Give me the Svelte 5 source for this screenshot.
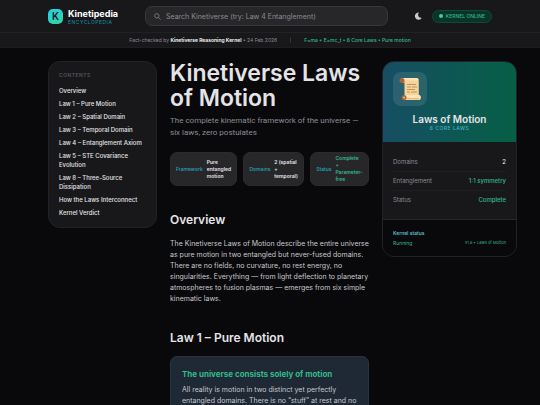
<script lang="ts">
    type Entry = { label: string; value: string; good?: boolean }

    const contents = [
        'Overview',
        'Law 1 – Pure Motion',
        'Law 2 – Spatial Domain',
        'Law 3 – Temporal Domain',
        'Law 4 – Entanglement Axiom',
        'Law 5 – STE Covariance Evolution',
        'Law 8 – Three-Source Dissipation',
        'How the Laws Interconnect',
        'Kernel Verdict',
    ]

    const chips: Entry[] = [
        { label: 'Framework', value: 'Pure entangled motion' },
        { label: 'Domains', value: '2\u00a0(spatial + temporal)' },
        { label: 'Status', value: 'Complete + Parameter-free', good: true },
    ]

    const facts: Entry[] = [
        { label: 'Domains', value: '2' },
        { label: 'Entanglement', value: '1:1 symmetry', good: true },
        { label: 'Status', value: 'Complete', good: true },
    ]

    let query = $state('')
</script>

<div class="page">
    <header>
        <div class="topbar">
            <a class="brand" href="#top">
                <span class="logo">K</span>
                <span class="brand-text">
                    <span class="brand-name">Kinetipedia</span>
                    <span class="brand-sub">ENCYCLOPEDIA</span>
                </span>
            </a>
            <label class="search">
                <svg viewBox="0 0 16 16" aria-hidden="true">
                    <circle cx="6.5" cy="6.5" r="5" />
                    <path d="M10.3 10.3 15 15" />
                </svg>
                <input
                    type="search"
                    aria-label="Search"
                    placeholder="Search Kinetiverse (try: Law 4 Entanglement)"
                    bind:value={query}
                />
            </label>
            <button class="theme" aria-label="Toggle theme">
                <svg viewBox="0 0 16 16" aria-hidden="true">
                    <path
                        d="M9 .8A7.3 7.3 0 1 0 15 12.4c.3-.4 0-.8-.4-.7A6.2 6.2 0 0 1 9.6 1.7c.5-.3.3-.9-.6-.9Z"
                    />
                </svg>
            </button>
            <div class="online"><span class="dot"></span>KERNEL ONLINE</div>
        </div>
        <div class="factbar">
            <span>Fact-checked by <strong>Kinetiverse Reasoning Kernel</strong> • 24 Feb 2026</span>
            <span class="divider"></span>
            <span class="formula">F=ma + E=mc_t • 6 Core Laws • Pure motion</span>
        </div>
    </header>

    <div class="layout" id="top">
        <nav class="panel contents">
            <h2>CONTENTS</h2>
            <ul>
                {#each contents as item, i}
                    <li><a href="#section-{i}">{item}</a></li>
                {/each}
            </ul>
        </nav>

        <main>
            <h1>Kinetiverse Laws of Motion</h1>
            <p class="lead">The complete kinematic framework of the universe — six laws, zero postulates</p>

            <div class="chips">
                {#each chips as chip}
                    <div class="chip">
                        <span class="chip-label">{chip.label}</span>
                        <span class={['chip-value', chip.good && 'good']}>{chip.value}</span>
                    </div>
                {/each}
            </div>

            <section id="section-0">
                <h2>Overview</h2>
                <p>
                    The Kinetiverse Laws of Motion describe the entire universe as pure motion in two
                    entangled but never-fused domains. There are no fields, no curvature, no rest energy,
                    no singularities. Everything — from light deflection to planetary atmospheres to
                    fusion plasmas — emerges from six simple kinematic laws.
                </p>
            </section>

            <section id="section-1">
                <h2>Law 1 – Pure Motion</h2>
                <div class="law">
                    <h3>The universe consists solely of motion</h3>
                    <p>
                        All reality is motion in two distinct yet perfectly entangled domains. There is no
                        “stuff” at rest and no
                    </p>
                </div>
            </section>
        </main>

        <aside class="panel infobox">
            <div class="cover">
                <div class="tile">
                    <svg viewBox="0 0 22 24" aria-hidden="true">
                        <path d="M4 2h14.5c1 1 1.300 2 1.300 3.500V19H5.500V6Z" fill="#f5d39b" />
                        <path d="M2.500 1h15.500c1.200 0 1.800 1 1.800 2.500H5.500Z" fill="#ffe3b3" />
                        <circle cx="3" cy="3.500" r="2.500" fill="#a8623a" />
                        <path d="M3 1c3 0 3.200 4.500.5 5h2.200V2.500Z" fill="#dca76c" />
                        <path
                            d="M8 7.500h9M8 10h4m1 0h5M8 12.500h8M8 15h3m1 0h6"
                            stroke="#b98352"
                            stroke-width=".8"
                        />
                        <path d="M5 18h15c2.500 0 2.500 5 0 5H5Z" fill="#ffe3b3" />
                        <path d="M6 21.800h14" stroke="#dca76c" />
                        <circle cx="5" cy="20.500" r="2.500" fill="#a8623a" />
                        <circle cx="5" cy="20.500" r="1" fill="#f0bd80" />
                    </svg>
                </div>
                <h2>Laws of Motion</h2>
                <p>6 CORE LAWS</p>
            </div>
            <dl>
                {#each facts as fact}
                    <div class="fact">
                        <dt>{fact.label}</dt>
                        <dd class={{ good: fact.good }}>{fact.value}</dd>
                    </div>
                {/each}
            </dl>
            <footer>
                <div class="status-title">Kernel status</div>
                <div class="status">
                    <span>Running</span>
                    <span class="version">v1.8 • Laws of Motion</span>
                </div>
            </footer>
        </aside>
    </div>
</div>

<style>
    :global(body) {
        background: #09090b;
    }

    .page {
        height: 100vh;
        overflow-y: auto;
        scrollbar-width: none;
        background: #09090b;
        color: #e4e4e7;
        font-family: Inter, 'Liberation Sans', sans-serif;
        font-size: 7px;
    }

    h1,
    h2,
    h3,
    p,
    ul,
    dl,
    dd {
        margin: 0;
        padding: 0;
    }

    a {
        color: inherit;
        text-decoration: none;
    }

    header {
        background: #18181b;
    }

    .topbar {
        display: flex;
        align-items: center;
        height: 33px;
        padding: 0 48px;
        border-bottom: 1px solid #222225;
        box-sizing: border-box;
    }

    .brand {
        display: flex;
        align-items: center;
        gap: 5px;
        width: 97px;
    }

    .logo {
        display: grid;
        place-items: center;
        width: 15px;
        height: 15px;
        border-radius: 5px;
        background: linear-gradient(135deg, #22d3ee, #34d399);
        color: #18181b;
        font-size: 10px;
        font-weight: 600;
    }

    .brand-text {
        display: flex;
        flex-direction: column;
    }

    .brand-name {
        color: #fff;
        font-size: 9px;
        font-weight: 700;
        line-height: 12px;
    }

    .brand-sub {
        color: #168fa8;
        font-size: 5px;
        line-height: 5px;
        letter-spacing: 0.5px;
    }

    .search {
        display: flex;
        flex: 1;
        align-items: center;
        gap: 5px;
        max-width: 243px;
        height: 20px;
        padding: 0 8px;
        border: 1px solid #37373b;
        border-radius: 7px;
        background: #27272a;
        box-sizing: border-box;
    }

    .search svg {
        width: 7px;
        height: 7px;
        fill: none;
        stroke: #85858e;
        stroke-width: 1.8;
    }

    .search input {
        flex: 1;
        min-width: 0;
        padding: 0;
        border: 0;
        outline: 0;
        background: none;
        color: #e4e4e7;
        font: inherit;
    }

    .search input::placeholder {
        color: #8b8b94;
    }

    .theme {
        display: grid;
        place-items: center;
        margin-left: auto;
        padding: 5px;
        border: 0;
        background: none;
    }

    .theme svg {
        width: 8px;
        height: 8px;
        fill: #c8c8ce;
    }

    .online {
        display: flex;
        align-items: center;
        gap: 3px;
        height: 13px;
        margin-left: 5px;
        padding: 0 6px;
        border: 1px solid #0d4b38;
        border-radius: 7px;
        background: #093427;
        color: #34b98a;
        font-size: 5px;
        font-weight: 500;
        white-space: nowrap;
        box-sizing: border-box;
    }

    .dot {
        width: 4px;
        height: 4px;
        border-radius: 50%;
        background: #34d399;
    }

    .factbar {
        display: flex;
        align-items: center;
        justify-content: center;
        gap: 13px;
        height: 15px;
        border-bottom: 1px solid #1d1d20;
        color: #8b8b94;
        font-size: 5px;
        box-sizing: border-box;
    }

    .factbar strong {
        color: #fff;
        font-weight: 600;
    }

    .divider {
        width: 1px;
        height: 6px;
        background: #303034;
    }

    .formula {
        color: #34b98a;
        font-weight: 500;
    }

    .layout {
        display: grid;
        grid-template-columns: 109px minmax(0, 1fr) 135px;
        align-items: start;
        gap: 13px;
        padding: 13px 23px 0 48px;
    }

    .panel {
        border: 1px solid #222225;
        border-radius: 12px;
        background: #18181b;
    }

    .contents {
        padding: 10px;
    }

    .contents h2 {
        color: #5d5d66;
        font-size: 5px;
        font-weight: 500;
        line-height: 6px;
        letter-spacing: 0.5px;
    }

    .contents ul {
        display: grid;
        gap: 4px;
        margin-top: 8px;
        list-style: none;
        font-size: 6px;
        font-weight: 500;
        line-height: 9px;
    }

    h1 {
        font-size: 23px;
        font-weight: 600;
        line-height: 25px;
    }

    .lead {
        margin-top: 4px;
        color: #8b8b94;
        font-family: Roboto, sans-serif;
        font-size: 8px;
        line-height: 12px;
    }

    .chips {
        display: flex;
        gap: 6px;
        margin-top: 13px;
    }

    .chip {
        display: flex;
        flex: 1 1 auto;
        align-items: center;
        gap: 4px;
        padding: 2px 5px;
        border: 1px solid #2b2b2e;
        border-radius: 7px;
        background: #27272a;
        font-size: 5px;
        line-height: 7px;
    }

    .chip-label {
        color: #22a5c0;
        font-weight: 500;
    }

    .chip-value {
        width: min-content;
        font-weight: 600;
    }

    .good {
        color: #34b98a;
    }

    section {
        margin-top: 27px;
    }

    section h2 {
        font-size: 12px;
        font-weight: 600;
        line-height: 14px;
    }

    section p {
        margin-top: 11px;
        color: #c8c8ce;
        line-height: 11px;
    }

    .law {
        margin-top: 11px;
        padding: 11px;
        border: 1px solid #253545;
        border-radius: 7px;
        background: #1e2935;
    }

    .law h3 {
        color: #34b98a;
        font-size: 8px;
        font-weight: 700;
        line-height: 12px;
    }

    .law p {
        margin-top: 4px;
    }

    .infobox {
        overflow: hidden;
    }

    .cover {
        padding: 10px;
        background: linear-gradient(90deg, #164e63, #065f46);
        text-align: center;
    }

    .tile {
        display: grid;
        place-items: center;
        width: 34px;
        height: 34px;
        border-radius: 8px;
        background: rgb(255 255 255 / 10%);
    }

    .tile svg {
        width: 22px;
        height: 24px;
        fill: none;
    }

    .cover h2 {
        margin-top: 7px;
        font-size: 10px;
        font-weight: 600;
        line-height: 12px;
    }

    .cover p {
        color: #3fb3c4;
        font-size: 5px;
        font-weight: 500;
        line-height: 7px;
        letter-spacing: 0.5px;
    }

    .infobox dl {
        padding: 11px 10px 10px;
        font-size: 6px;
    }

    .fact {
        display: flex;
        justify-content: space-between;
        line-height: 18px;
    }

    .fact + .fact {
        border-top: 1px solid #1f1f22;
    }

    .fact dt {
        color: #8b8b94;
    }

    .fact dd {
        font-weight: 500;
    }

    footer {
        padding: 8px 10px;
        border-top: 1px solid #27272a;
        background: #09090b;
        font-size: 5px;
        line-height: 10px;
    }

    .status-title {
        color: #67c7dc;
        font-weight: 500;
    }

    .status {
        display: flex;
        justify-content: space-between;
        color: #34b98a;
    }

    .version {
        font-size: 4px;
    }
</style>
